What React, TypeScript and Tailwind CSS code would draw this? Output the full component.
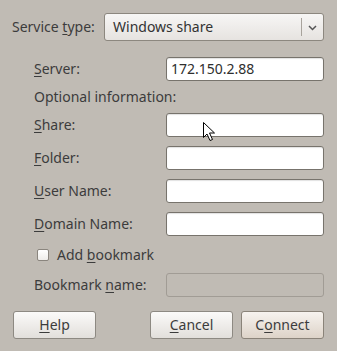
import React from "react";

const U = ({ children }: { children: React.ReactNode }) => (
  <span className="underline underline-offset-[2px] decoration-1">{children}</span>
);

const Entry = ({ value, disabled }: { value?: string; disabled?: boolean }) => (
  <div
    className={
      "w-[158px] h-[24px] rounded-[3px] border flex items-center px-[4px] text-[#2e2e2e] " +
      (disabled
        ? "bg-[#c0bbb4] border-[#a19c95]"
        : "bg-white border-[#77736c] shadow-[inset_0_1px_1px_rgba(0,0,0,0.12)]")
    }
  >
    {value}
  </div>
);

const Row = ({ label, children, className = "" }: { label: React.ReactNode; children: React.ReactNode; className?: string }) => (
  <div className={"flex items-center ml-[34px] " + className}>
    <div className="w-[132px]">{label}</div>
    {children}
  </div>
);

const Button = ({ children, def, className = "" }: { children: React.ReactNode; def?: boolean; className?: string }) => (
  <div
    className={
      "w-[83px] h-[28px] rounded-[3px] border flex items-center justify-center " +
      (def
        ? "border-[#8a8379] bg-gradient-to-b from-[#f7f3ef] to-[#ddd3c8]"
        : "border-[#8d8982] bg-gradient-to-b from-[#fbfaf9] to-[#e2dfdb]") +
      " " +
      className
    }
  >
    {children}
  </div>
);

export default function App() {
  return (
    <div
      className="relative w-[337px] h-[351px] bg-[#c0bbb4] text-[#3c3c3c] text-[14px] leading-none overflow-hidden"
      style={{ fontFamily: "'Noto Sans', 'DejaVu Sans', sans-serif" }}
    >
      <div className="flex items-center ml-[12px] pt-[13px]">
        <div className="w-[92px]">
          Service <U>t</U>ype:
        </div>
        <div className="relative w-[220px] h-[28px] rounded-[3px] border border-[#8c877f] bg-gradient-to-b from-[#f7f6f5] to-[#e6e3e0] flex items-center pl-[8px]">
          <span className="text-[#333]">Windows share</span>
          <div className="absolute right-[21px] top-[4px] bottom-[4px] w-px bg-[#a8a39c]" />
          <svg className="absolute right-[6px] top-[11px]" width="9" height="6" viewBox="0 0 9 6">
            <path d="M1 1 L4.5 4.5 L8 1" fill="none" stroke="#555" strokeWidth="1.5" />
          </svg>
        </div>
      </div>

      <Row label={<><U>S</U>erver:</>} className="mt-[16px]">
        <Entry value="172.150.2.88" />
      </Row>

      <div className="ml-[34px] h-[31px] flex items-center">Optional information:</div>

      <Row label={<><U>S</U>hare:</>} className="mt-[1px]">
        <Entry />
      </Row>
      <Row label={<><U>F</U>older:</>} className="mt-[9px]">
        <Entry />
      </Row>
      <Row label={<><U>U</U>ser Name:</>} className="mt-[9px]">
        <Entry />
      </Row>
      <Row label={<><U>D</U>omain Name:</>} className="mt-[9px]">
        <Entry />
      </Row>

      <div className="h-[37px] flex items-center ml-[37px]">
        <div className="w-[12px] h-[12px] rounded-[2px] border border-[#8a857e] bg-gradient-to-b from-white to-[#eeece9]" />
        <span className="ml-[8px]">
          Add <U>b</U>ookmark
        </span>
      </div>

      <Row label={<>Bookmark <U>n</U>ame:</>}>
        <Entry disabled />
      </Row>

      <div className="flex ml-[13px] mt-[14px]">
        <Button>
          <U>H</U>elp
        </Button>
        <Button className="ml-[54px]">
          <U>C</U>ancel
        </Button>
        <Button def className="ml-[8px]">
          C<U>o</U>nnect
        </Button>
      </div>

      <svg className="absolute left-[202px] top-[121px]" width="14" height="22" viewBox="0 0 14 22">
        <path
          d="M1.5 1.5 L1.5 16.5 L5 13 L8 19.5 L10.5 18.5 L7.5 12 L12.5 12 Z"
          fill="#fff"
          stroke="#000"
          strokeWidth="1"
          strokeLinejoin="round"
        />
      </svg>
    </div>
  );
}
